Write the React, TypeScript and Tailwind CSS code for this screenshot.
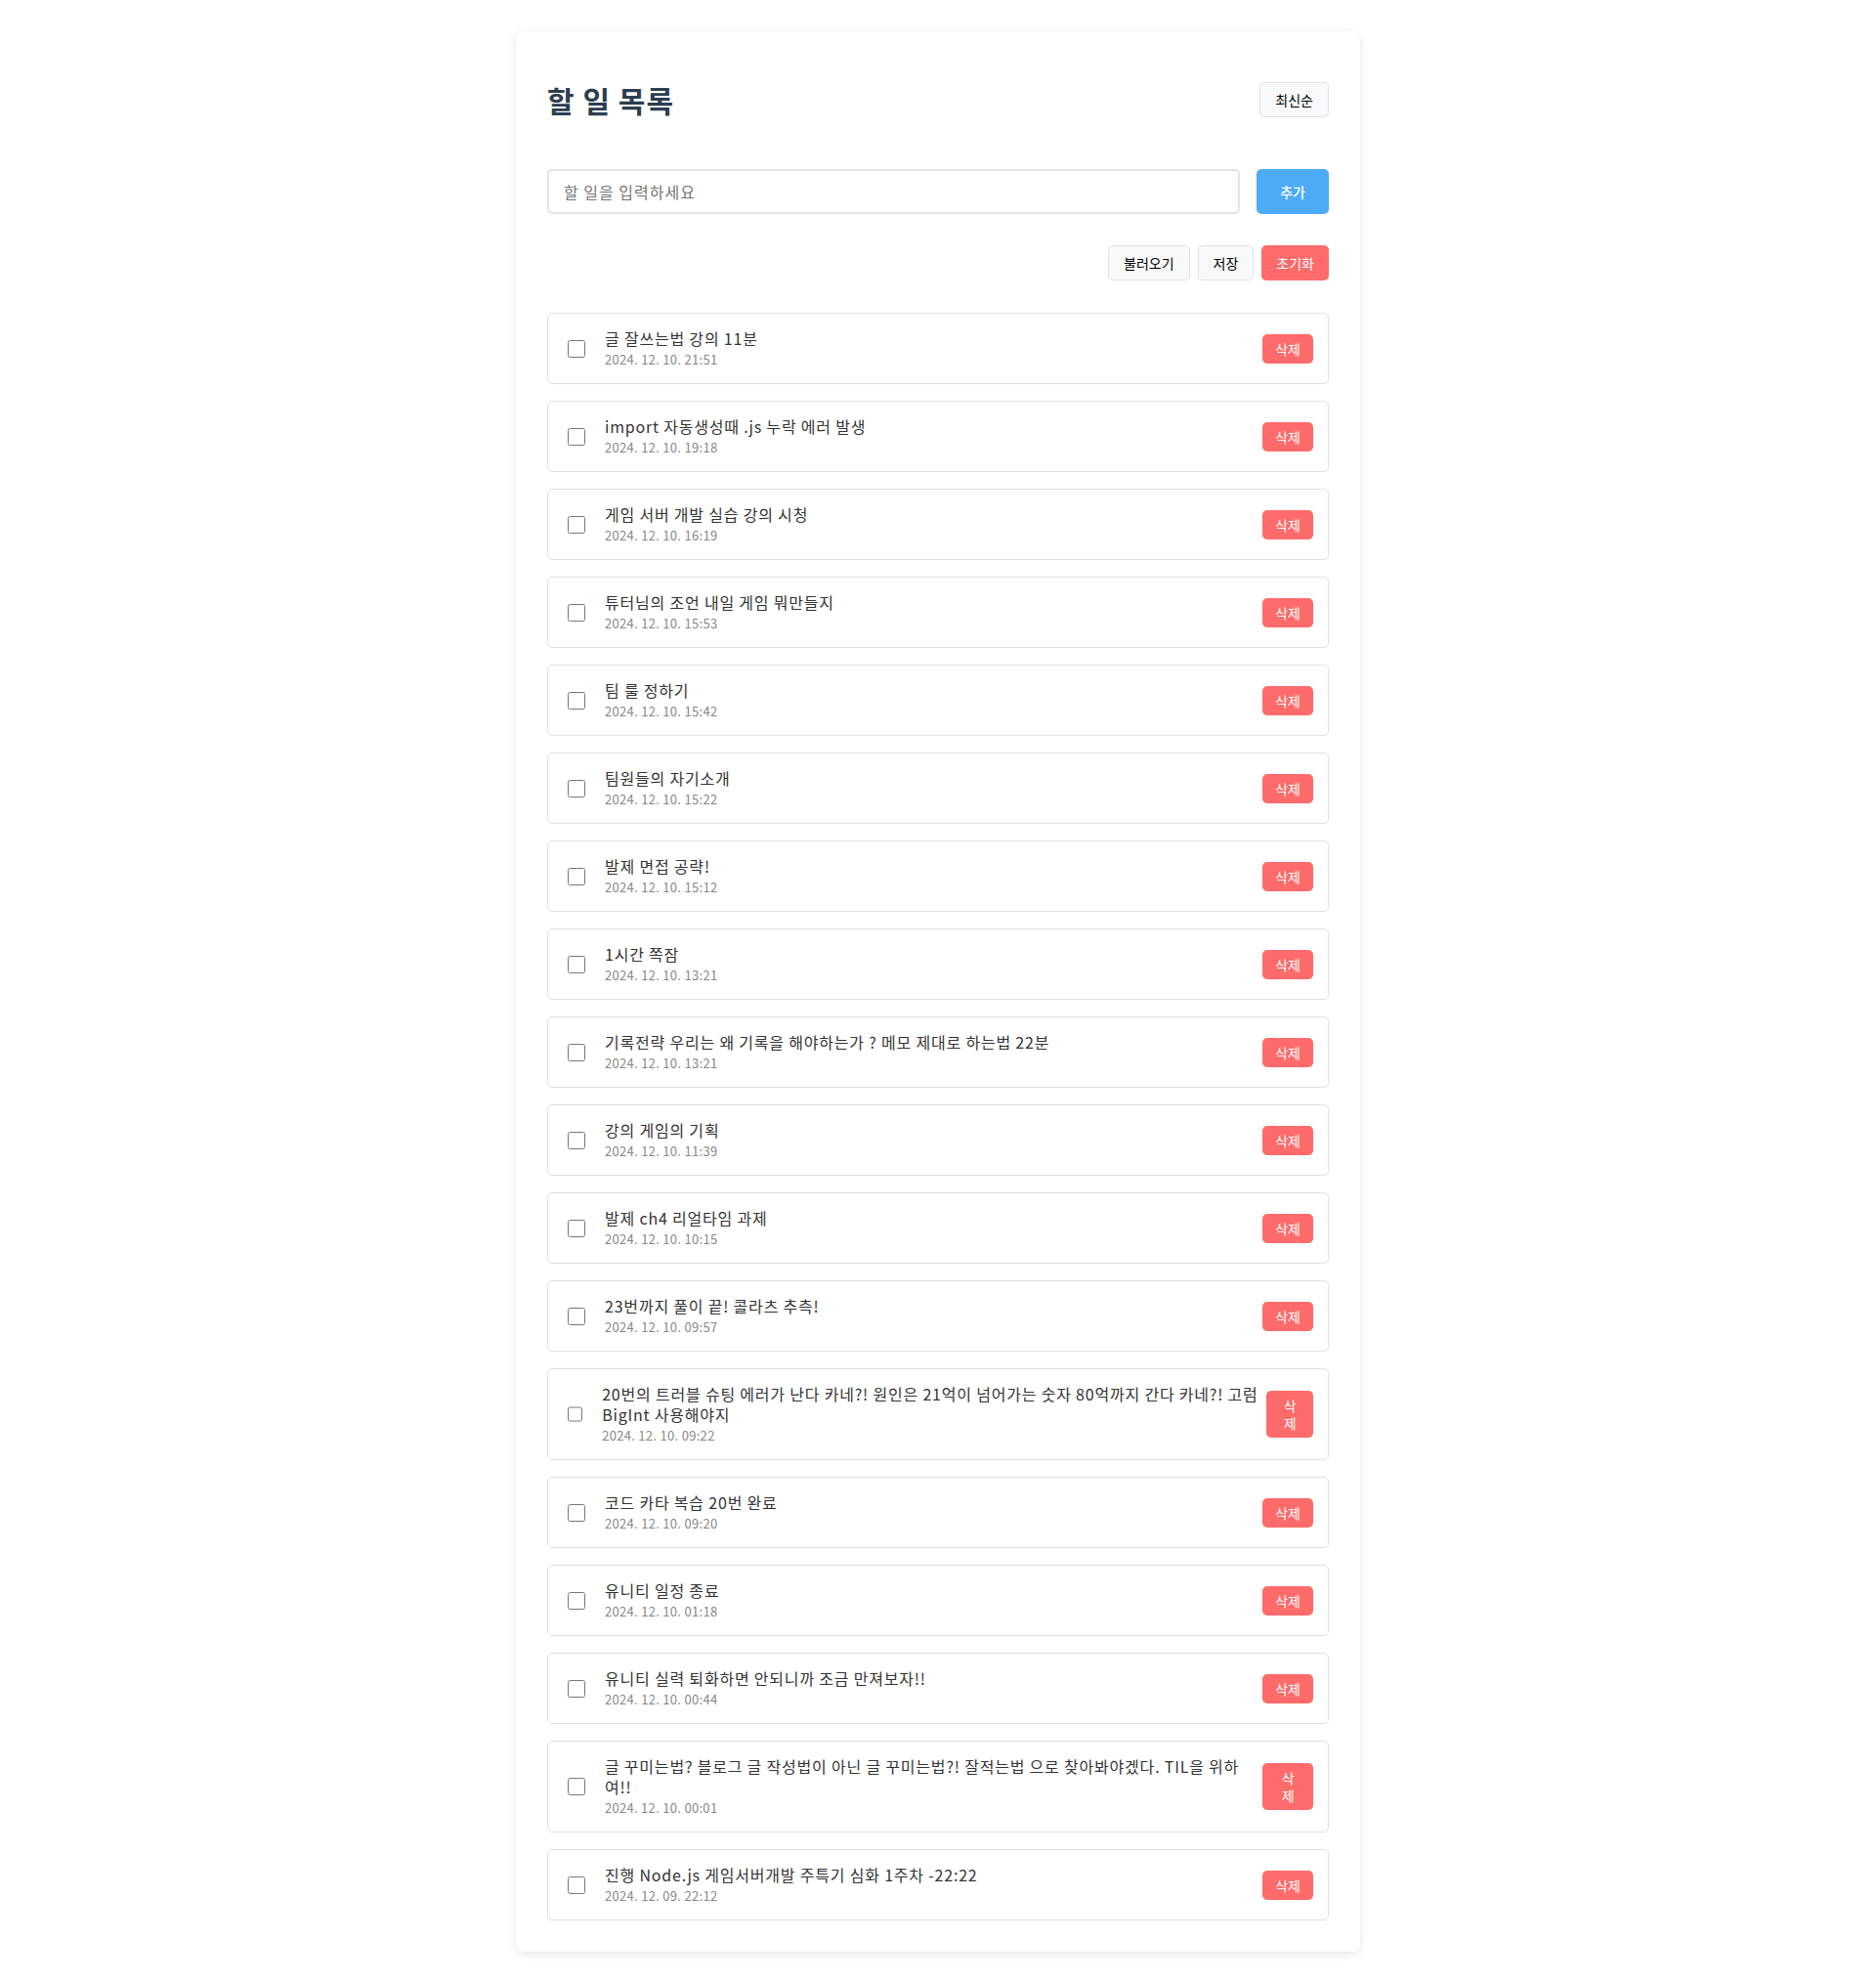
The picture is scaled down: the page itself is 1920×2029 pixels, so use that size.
import { useState } from "react";

type Todo = {
  id: number;
  text: string;
  date: string;
  done: boolean;
};

const initialTodos: Todo[] = [
  { id: 1, text: "글 잘쓰는법 강의 11분", date: "2024. 12. 10. 21:51", done: false },
  { id: 2, text: "import 자동생성때 .js 누락 에러 발생", date: "2024. 12. 10. 19:18", done: false },
  { id: 3, text: "게임 서버 개발 실습 강의 시청", date: "2024. 12. 10. 16:19", done: false },
  { id: 4, text: "튜터님의 조언 내일 게임 뭐만들지", date: "2024. 12. 10. 15:53", done: false },
  { id: 5, text: "팀 룰 정하기", date: "2024. 12. 10. 15:42", done: false },
  { id: 6, text: "팀원들의 자기소개", date: "2024. 12. 10. 15:22", done: false },
  { id: 7, text: "발제 면접 공략!", date: "2024. 12. 10. 15:12", done: false },
  { id: 8, text: "1시간 쪽잠", date: "2024. 12. 10. 13:21", done: false },
  { id: 9, text: "기록전략 우리는 왜 기록을 해야하는가 ? 메모 제대로 하는법 22분", date: "2024. 12. 10. 13:21", done: false },
  { id: 10, text: "강의 게임의 기획", date: "2024. 12. 10. 11:39", done: false },
  { id: 11, text: "발제 ch4 리얼타임 과제", date: "2024. 12. 10. 10:15", done: false },
  { id: 12, text: "23번까지 풀이 끝! 콜라츠 추측!", date: "2024. 12. 10. 09:57", done: false },
  {
    id: 13,
    text: "20번의 트러블 슈팅 에러가 난다 카네?! 원인은 21억이 넘어가는 숫자 80억까지 간다 카네?! 고럼 BigInt 사용해야지",
    date: "2024. 12. 10. 09:22",
    done: false,
  },
  { id: 14, text: "코드 카타 복습 20번 완료", date: "2024. 12. 10. 09:20", done: false },
  { id: 15, text: "유니티 일정 종료", date: "2024. 12. 10. 01:18", done: false },
  { id: 16, text: "유니티 실력 퇴화하면 안되니까 조금 만져보자!!", date: "2024. 12. 10. 00:44", done: false },
  {
    id: 17,
    text: "글 꾸미는법? 블로그 글 작성법이 아닌 글 꾸미는법?! 잘적는법 으로 찾아봐야겠다. TIL을 위하여!!",
    date: "2024. 12. 10. 00:01",
    done: false,
  },
  { id: 18, text: "진행 Node.js 게임서버개발 주특기 심화 1주차 -22:22", date: "2024. 12. 09. 22:12", done: false },
];

export default function App() {
  const [todos, setTodos] = useState<Todo[]>(initialTodos);
  const [input, setInput] = useState("");

  const toggle = (id: number) =>
    setTodos((list) => list.map((t) => (t.id === id ? { ...t, done: !t.done } : t)));

  const remove = (id: number) => setTodos((list) => list.filter((t) => t.id !== id));

  return (
    <div className="min-h-screen bg-white py-8 font-['Noto_Sans_CJK_KR','Noto_Sans',sans-serif]">
      <div className="mx-auto w-[864px] rounded-lg bg-white px-8 pt-[52px] pb-8 shadow-[0_2px_10px_rgba(0,0,0,0.1)]">
        {/* Header */}
        <div className="flex h-9 items-center justify-between">
          <h1 className="text-[30px] font-bold tracking-[1px] text-[#2c3e50]">할 일 목록</h1>
          <button className="h-9 rounded-[5px] border border-[#dee2e6] bg-[#f8f9fa] px-[15px] text-sm text-black">
            최신순
          </button>
        </div>

        {/* Input */}
        <div className="mt-[53px] flex h-[46px] gap-[17px]">
          <input
            value={input}
            onChange={(e) => setInput(e.target.value)}
            placeholder="할 일을 입력하세요"
            className="min-w-0 flex-1 rounded-[5px] border-2 border-[#e1e4e8] px-[15px] text-base tracking-[1px] text-[#333] outline-none placeholder:text-[#757575]"
          />
          <button className="rounded-[5px] bg-[#4dabf7] px-6 text-sm font-medium text-white">추가</button>
        </div>

        {/* Actions */}
        <div className="mt-[32px] flex justify-end gap-2">
          <button className="h-9 rounded-[5px] border border-[#dee2e6] bg-[#f8f9fa] px-[15px] text-sm text-black">
            불러오기
          </button>
          <button className="h-9 rounded-[5px] border border-[#dee2e6] bg-[#f8f9fa] px-[15px] text-sm text-black">
            저장
          </button>
          <button className="h-9 rounded-[5px] bg-[#ff6b6b] px-[15px] text-sm text-white">초기화</button>
        </div>

        {/* List */}
        <ul className="mt-[33px] flex flex-col gap-[17px]">
          {todos.map((todo) => (
            <li
              key={todo.id}
              className="flex items-center rounded-[5px] border border-[#e0e0e0] bg-white p-[15px]"
            >
              <input
                type="checkbox"
                checked={todo.done}
                onChange={() => toggle(todo.id)}
                className="ml-[5px] mr-[20px] h-[18px] w-[18px]"
              />
              <div className="min-w-0">
                <div
                  className={`text-base leading-[21px] tracking-[0.8px] ${
                    todo.done ? "text-[#999] line-through" : "text-[#333]"
                  }`}
                >
                  {todo.text}
                </div>
                <div className="mt-[1px] text-[13px] leading-[19px] tracking-[0.3px] text-[#888]">{todo.date}</div>
              </div>
              <button
                onClick={() => remove(todo.id)}
                className="ml-auto rounded-[5px] bg-[#ff6b6b] px-[13px] py-1.5 text-sm leading-[18px] text-white"
              >
                삭제
              </button>
            </li>
          ))}
        </ul>
      </div>
    </div>
  );
}
